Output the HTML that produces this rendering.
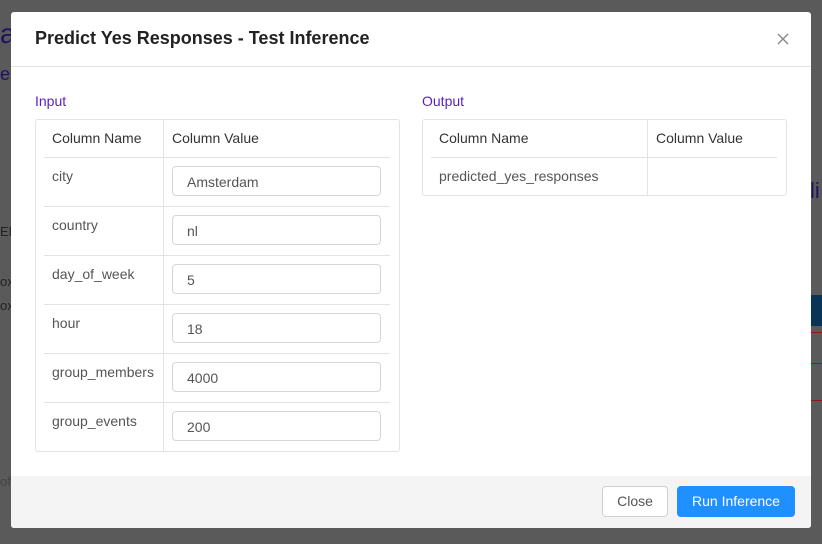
<!DOCTYPE html>
<html><head><style>
body{margin:0;width:822px;height:544px;background:#5a5a5a;font-family:"Liberation Sans",sans-serif;position:relative;overflow:hidden}
.abs{position:absolute}
.modal{left:11px;top:12px;width:800px;height:516px;background:#fff;border-radius:3px;overflow:hidden}
.t{color:#333;font-size:14px;white-space:nowrap}
.box{border:1px solid #e3e3e3;border-radius:3px;background:#fff}
.hl{height:1px;background:#e3e3e3}
.vl{width:1px;background:#e3e3e3}
.inp{border:1px solid #d6d6d6;border-radius:4px;width:209px;height:30px;box-sizing:border-box;left:172px;padding:7px 0 0 14px;color:#555;font-size:14px}
.cell{color:#555;font-size:14px;left:52px}
</style></head><body>
<div class="abs" style="left:0;top:18px;font-size:28px;color:#1e1260">a</div>
<div class="abs" style="left:0;top:64px;font-size:18px;color:#1e1260">es</div>
<div class="abs" style="left:0;top:224px;font-size:13px;color:#222">EM</div>
<div class="abs" style="left:0;top:274px;font-size:13px;color:#222">ox</div>
<div class="abs" style="left:0;top:298px;font-size:13px;color:#222">ox</div>
<div class="abs" style="left:0;top:474px;font-size:13px;color:#444">ofo</div>
<div class="abs" style="left:810px;top:178px;font-size:22px;color:#1e1260">li</div>
<div class="abs" style="left:811px;top:295px;width:11px;height:31px;background:#0a3358"></div>
<div class="abs" style="left:811px;top:332px;width:11px;height:1px;background:#8b1a1a"></div>
<div class="abs" style="left:811px;top:363px;width:11px;height:1px;background:#8b1a1a"></div>
<div class="abs" style="left:811px;top:400px;width:11px;height:1px;background:#8b1a1a"></div>

<div class="abs modal"></div>
<div class="abs t" style="left:35px;top:28px;font-size:18px;font-weight:bold;color:#222">Predict Yes Responses - Test Inference</div>
<svg class="abs" style="left:777px;top:33px" width="12" height="12"><path d="M1 1L11 11M11 1L1 11" stroke="#888" stroke-width="1.4"/></svg>
<div class="abs hl" style="left:11px;top:66px;width:800px"></div>

<div class="abs" style="left:35px;top:93px;font-size:14px;color:#5a1fc4">Input</div>
<div class="abs" style="left:422px;top:93px;font-size:14px;color:#5a1fc4">Output</div>

<div class="abs box" style="left:35px;top:119px;width:363px;height:331px"></div>
<div class="abs vl" style="left:163px;top:120px;height:331px"></div>
<div class="abs t" style="left:52px;top:130px">Column Name</div>
<div class="abs t" style="left:172px;top:130px">Column Value</div>
<div class="abs hl" style="left:44px;top:157px;width:346px"></div>
<div class="abs hl" style="left:44px;top:206px;width:346px"></div>
<div class="abs hl" style="left:44px;top:255px;width:346px"></div>
<div class="abs hl" style="left:44px;top:304px;width:346px"></div>
<div class="abs hl" style="left:44px;top:353px;width:346px"></div>
<div class="abs hl" style="left:44px;top:402px;width:346px"></div>

<div class="abs cell" style="top:168px">city</div>
<div class="abs cell" style="top:217px">country</div>
<div class="abs cell" style="top:266px">day_of_week</div>
<div class="abs cell" style="top:315px">hour</div>
<div class="abs cell" style="top:364px">group_members</div>
<div class="abs cell" style="top:413px">group_events</div>
<div class="abs inp" style="top:166px">Amsterdam</div>
<div class="abs inp" style="top:215px">nl</div>
<div class="abs inp" style="top:264px">5</div>
<div class="abs inp" style="top:313px">18</div>
<div class="abs inp" style="top:362px">4000</div>
<div class="abs inp" style="top:411px">200</div>

<div class="abs box" style="left:422px;top:119px;width:363px;height:75px"></div>
<div class="abs vl" style="left:647px;top:120px;height:75px"></div>
<div class="abs t" style="left:439px;top:130px">Column Name</div>
<div class="abs t" style="left:656px;top:130px">Column Value</div>
<div class="abs hl" style="left:431px;top:157px;width:346px"></div>
<div class="abs cell" style="left:439px;top:168px">predicted_yes_responses</div>

<div class="abs" style="left:11px;top:476px;width:800px;height:52px;background:#f4f4f4;border-radius:0 0 3px 3px"></div>
<div class="abs" style="left:602px;top:486px;width:66px;height:31px;box-sizing:border-box;border:1px solid #d0d0d0;border-radius:4px;background:#fff;color:#555;font-size:14px;text-align:center;line-height:29px">Close</div>
<div class="abs" style="left:677px;top:486px;width:118px;height:31px;border-radius:4px;background:#1e90ff;color:#fff;font-size:14px;text-align:center;line-height:31px">Run Inference</div>
</body></html>
